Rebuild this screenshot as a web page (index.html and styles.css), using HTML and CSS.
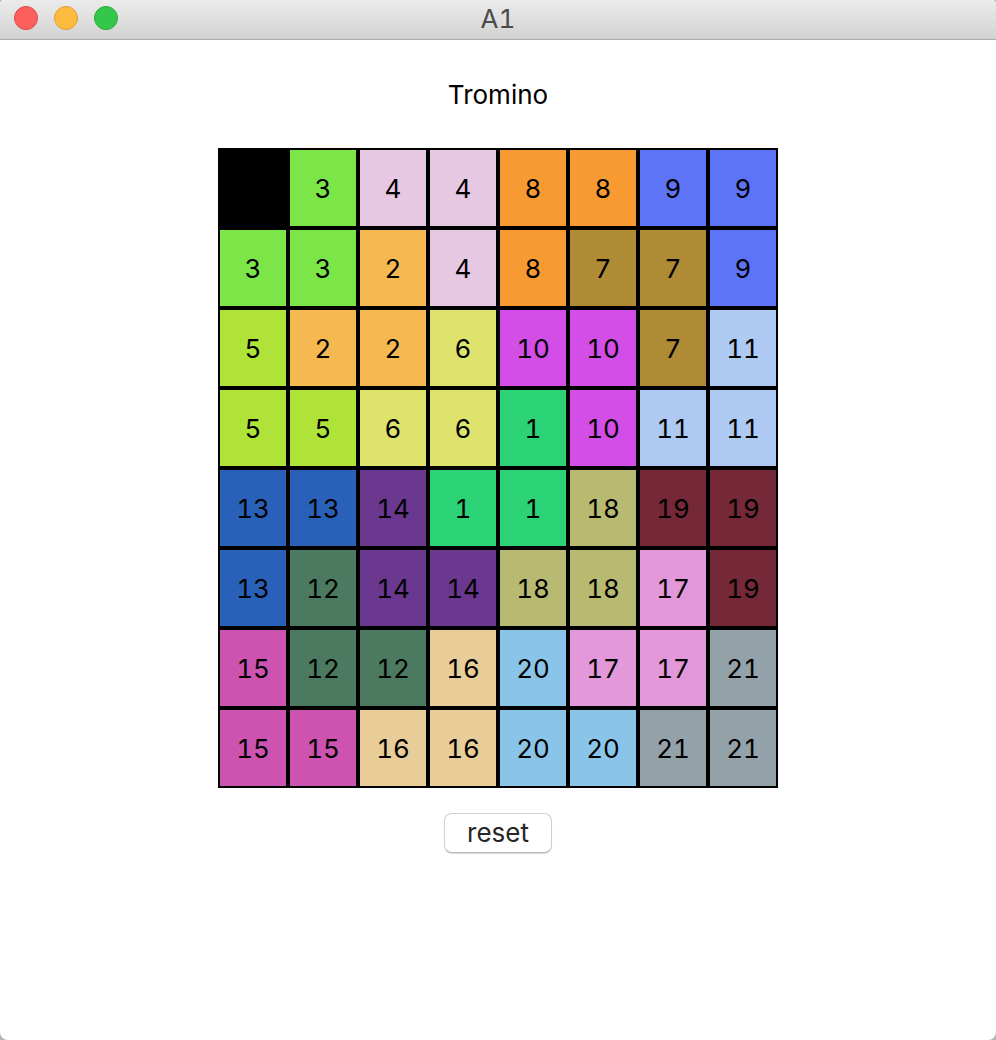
FILE: index.html
```html
<!DOCTYPE html>
<html lang="en">
<head>
<meta charset="utf-8">
<title>A1</title>
<link rel="stylesheet" href="styles.css">
</head>
<body>
<div class="window">
  <header class="titlebar">
    <div class="controls">
      <button class="light close" type="button" aria-label="Close"></button>
      <button class="light minimize" type="button" aria-label="Minimize"></button>
      <button class="light maximize" type="button" aria-label="Zoom"></button>
    </div>
    <div class="title">A1</div>
  </header>
  <main class="content">
    <h1 class="heading">Tromino</h1>
    <table class="board">
      <tbody>
        <tr><td class="hole"></td><td class="t3">3</td><td class="t4">4</td><td class="t4">4</td><td class="t8">8</td><td class="t8">8</td><td class="t9">9</td><td class="t9">9</td></tr>
        <tr><td class="t3">3</td><td class="t3">3</td><td class="t2">2</td><td class="t4">4</td><td class="t8">8</td><td class="t7">7</td><td class="t7">7</td><td class="t9">9</td></tr>
        <tr><td class="t5">5</td><td class="t2">2</td><td class="t2">2</td><td class="t6">6</td><td class="t10">10</td><td class="t10">10</td><td class="t7">7</td><td class="t11">11</td></tr>
        <tr><td class="t5">5</td><td class="t5">5</td><td class="t6">6</td><td class="t6">6</td><td class="t1">1</td><td class="t10">10</td><td class="t11">11</td><td class="t11">11</td></tr>
        <tr><td class="t13">13</td><td class="t13">13</td><td class="t14">14</td><td class="t1">1</td><td class="t1">1</td><td class="t18">18</td><td class="t19">19</td><td class="t19">19</td></tr>
        <tr><td class="t13">13</td><td class="t12">12</td><td class="t14">14</td><td class="t14">14</td><td class="t18">18</td><td class="t18">18</td><td class="t17">17</td><td class="t19">19</td></tr>
        <tr><td class="t15">15</td><td class="t12">12</td><td class="t12">12</td><td class="t16">16</td><td class="t20">20</td><td class="t17">17</td><td class="t17">17</td><td class="t21">21</td></tr>
        <tr><td class="t15">15</td><td class="t15">15</td><td class="t16">16</td><td class="t16">16</td><td class="t20">20</td><td class="t20">20</td><td class="t21">21</td><td class="t21">21</td></tr>
      </tbody>
    </table>
    <button class="reset" type="button">reset</button>
  </main>
</div>
</body>
</html>
```
FILE: styles.css
```css
* {
  box-sizing: border-box;
}

body {
  margin: 0;
  background: #b4b4b4;
  color: #000;
  font-family: Inter, "Noto Sans", sans-serif;
  font-size: 26px;
  font-variant-numeric: tabular-nums;
  line-height: 32px;
}

.window {
  display: flex;
  flex-direction: column;
  min-height: 100vh;
  background: #fff;
  border-radius: 4px 4px 8px 8px;
  overflow: hidden;
}

.titlebar {
  display: grid;
  grid-template-columns: 1fr auto 1fr;
  align-items: center;
  padding: 0 14px 3px;
  height: 40px;
  background: linear-gradient(#ebebeb, #d2d2d2);
  border-bottom: 1px solid #acacac;
}

.controls {
  display: flex;
  gap: 16px;
}

.light {
  width: 24px;
  height: 24px;
  padding: 0;
  border: 1px solid;
  border-radius: 50%;
}

.close {
  background: #fc605c;
  border-color: #df4744;
}

.minimize {
  background: #fdbc40;
  border-color: #de9f34;
}

.maximize {
  background: #34c84a;
  border-color: #27aa35;
}

.title {
  padding-top: 2px;
  color: #4b4b4b;
}

.content {
  display: flex;
  flex-direction: column;
  align-items: center;
  padding: 39px 16px;
}

.heading {
  margin: 0 0 37px;
  font-size: 26px;
  font-weight: 400;
}

.board {
  border-collapse: separate;
  border-spacing: 0;
  table-layout: fixed;
  width: 560px;
  text-align: center;
}

.board td {
  height: 80px;
  padding: 2px 0 0;
  border: 2px solid #000;
}

.reset {
  margin-top: 25px;
  width: 108px;
  height: 40px;
  padding: 0;
  border: 1px solid #d0d0d0;
  border-bottom-color: #b8b8b8;
  border-radius: 8px;
  background: #fff;
  box-shadow: 0 1px 1px rgba(0, 0, 0, 0.15);
  color: #262626;
  font: inherit;
}

.hole { background: #000; }
.t1 { background: #2bd276; }
.t2 { background: #f6b850; }
.t3 { background: #7ce548; }
.t4 { background: #e7c8e2; }
.t5 { background: #afe337; }
.t6 { background: #dee36c; }
.t7 { background: #af8b35; }
.t8 { background: #f89a32; }
.t9 { background: #5d74f7; }
.t10 { background: #d34de7; }
.t11 { background: #aec9f2; }
.t12 { background: #4c7a61; }
.t13 { background: #2a61b8; }
.t14 { background: #6b388f; }
.t15 { background: #cd53b0; }
.t16 { background: #e8cd98; }
.t17 { background: #e398da; }
.t18 { background: #b8ba72; }
.t19 { background: #742838; }
.t20 { background: #8ac5e9; }
.t21 { background: #93a1a8; }
```
